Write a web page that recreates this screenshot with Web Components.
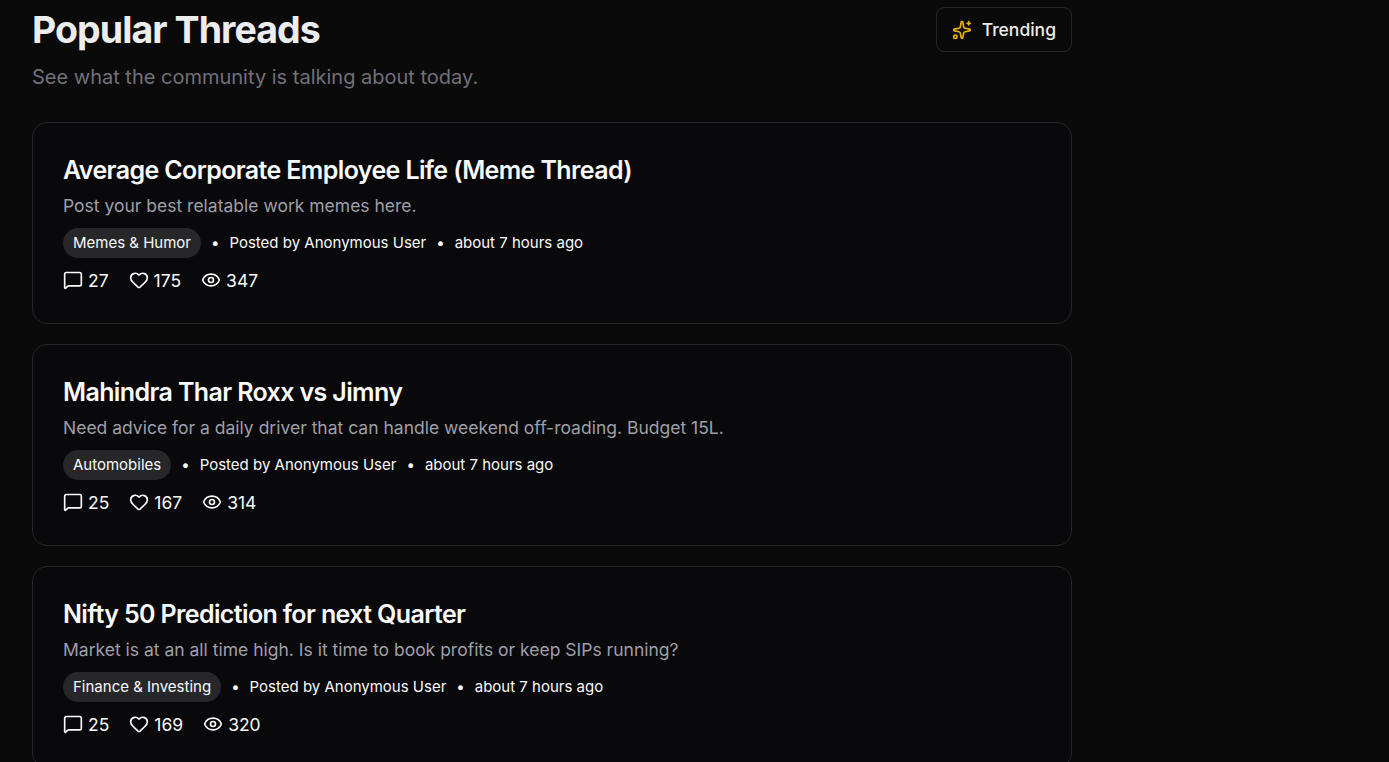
<!DOCTYPE html>
<html lang="en">
<head>
<meta charset="utf-8">
<title>Popular Threads</title>
<style>
  body {
    margin: 0;
    height: 762px;
    overflow: hidden;
    background: #0a0a0a;
    color: #fafafa;
    font-family: Inter, "Liberation Sans", sans-serif;
  }
</style>
</head>
<body>
<thread-page>
  <page-header slot="header">
    Popular Threads
    <span slot="subtitle">See what the community is talking about today.</span>
    <trend-button slot="action">Trending</trend-button>
  </page-header>
  <thread-card category="Memes &amp; Humor" author="Anonymous User" time="about 7 hours ago" comments="27" likes="175" views="347">
    Average Corporate Employee Life (Meme Thread)
    <span slot="excerpt">Post your best relatable work memes here.</span>
  </thread-card>
  <thread-card category="Automobiles" author="Anonymous User" time="about 7 hours ago" comments="25" likes="167" views="314">
    Mahindra Thar Roxx vs Jimny
    <span slot="excerpt">Need advice for a daily driver that can handle weekend off-roading. Budget 15L.</span>
  </thread-card>
  <thread-card category="Finance &amp; Investing" author="Anonymous User" time="about 7 hours ago" comments="25" likes="169" views="320">
    Nifty 50 Prediction for next Quarter
    <span slot="excerpt">Market is at an all time high. Is it time to book profits or keep SIPs running?</span>
  </thread-card>
</thread-page>

<script>
(function () {
  const ICONS = {
    comment: '<path d="M22 17a2 2 0 0 1-2 2H6.828a2 2 0 0 0-1.414.586l-2.202 2.202A.71.71 0 0 1 2 21.286V5a2 2 0 0 1 2-2h16a2 2 0 0 1 2 2z"/>',
    heart: '<path d="M2 9.5a5.5 5.5 0 0 1 9.591-3.676.56.56 0 0 0 .818 0A5.49 5.49 0 0 1 22 9.5c0 2.29-1.5 4-3 5.5l-5.492 5.313a2 2 0 0 1-3 .019L5 15c-1.5-1.5-3-3.2-3-5.5"/>',
    eye: '<path d="M2.062 12.348a1 1 0 0 1 0-.696 10.75 10.75 0 0 1 19.876 0 1 1 0 0 1 0 .696 10.75 10.75 0 0 1-19.876 0"/><circle cx="12" cy="12" r="3"/>',
    sparkles: '<path d="M11.017 2.814a1 1 0 0 1 1.966 0l1.051 5.558a2 2 0 0 0 1.594 1.594l5.558 1.051a1 1 0 0 1 0 1.966l-5.558 1.051a2 2 0 0 0-1.594 1.594l-1.051 5.558a1 1 0 0 1-1.966 0l-1.051-5.558a2 2 0 0 0-1.594-1.594l-5.558-1.051a1 1 0 0 1 0-1.966l5.558-1.051a2 2 0 0 0 1.594-1.594z"/><path d="M20 2v4"/><path d="M22 4h-4"/><circle cx="4" cy="20" r="2"/>'
  };

  function createTemplate(html) {
    const template = document.createElement('template');
    template.innerHTML = html;
    return template;
  }

  class BaseElement extends HTMLElement {
    constructor() {
      super();
      this.attachShadow({mode: 'open'});
      this.shadowRoot.appendChild(this.constructor.template.content.cloneNode(true));
    }
  }

  class ThreadIcon extends BaseElement {
    static template = createTemplate(`
      <style>
        :host {
          display: block;
          flex: none;
          width: 20px;
          height: 20px;
        }

        svg {
          display: block;
          width: 100%;
          height: 100%;
          overflow: visible;
        }
      </style>
      <svg viewBox="0 0 24 24" fill="none" stroke="currentColor" stroke-width="2"
           stroke-linecap="round" stroke-linejoin="round"></svg>
    `);

    connectedCallback() {
      this.shadowRoot.querySelector('svg').innerHTML = ICONS[this.getAttribute('name')] || '';
    }
  }

  class TrendButton extends BaseElement {
    static template = createTemplate(`
      <style>
        :host {
          display: block;
        }

        button {
          display: flex;
          align-items: center;
          gap: 10px;
          box-sizing: border-box;
          height: 45px;
          padding: 0 15px;
          border: 1px solid #262629;
          border-radius: 8px;
          background: none;
          color: #ededed;
          font: 500 17.5px/25px Inter, sans-serif;
        }

        thread-icon {
          color: #eab308;
        }
      </style>
      <button type="button"><thread-icon name="sparkles"></thread-icon><slot></slot></button>
    `);
  }

  class PageHeader extends BaseElement {
    static template = createTemplate(`
      <style>
        :host {
          display: flex;
          justify-content: space-between;
          align-items: flex-start;
          margin-bottom: 10px;
        }

        h1 {
          margin: 0 0 10px;
          color: #ededed;
          font-size: 37.5px;
          font-weight: 700;
          line-height: 45px;
          letter-spacing: -0.025em;
        }

        p {
          margin: 0;
          color: #71717a;
          font-size: 20px;
          line-height: 30px;
        }
      </style>
      <div>
        <h1><slot></slot></h1>
        <p><slot name="subtitle"></slot></p>
      </div>
      <slot name="action"></slot>
    `);
  }

  class ThreadCard extends BaseElement {
    static template = createTemplate(`
      <style>
        :host {
          display: flex;
          flex-direction: column;
          padding: 30px;
          border: 1px solid #262629;
          border-radius: 15px;
          background: #09090b;
        }

        h2 {
          margin: 0 0 5px;
          font-size: 25px;
          font-weight: 600;
          line-height: 35px;
          letter-spacing: -0.025em;
        }

        p {
          margin: 0 0 10px;
          color: #9f9fa9;
          font-size: 17.5px;
          line-height: 25px;
        }

        .meta {
          display: flex;
          align-items: center;
          gap: 10px;
          margin-bottom: 10px;
          font-size: 15px;
          line-height: 20px;
        }

        .category {
          padding: 5px 10px;
          border-radius: 15px;
          background: #27272a;
        }

        .stats {
          display: flex;
          gap: 20px;
          font-size: 17.5px;
          line-height: 25px;
        }

        .stats div {
          display: flex;
          align-items: center;
          gap: 5px;
        }

        /* keeps the 20px icon on whole pixels inside the 25px line */
        .stats thread-icon {
          margin-bottom: 1px;
        }
      </style>
      <h2><slot></slot></h2>
      <p><slot name="excerpt"></slot></p>
      <div class="meta">
        <span class="category"></span>
        <span>•</span>
        <span class="author"></span>
        <span>•</span>
        <span class="time"></span>
      </div>
      <div class="stats">
        <div><thread-icon name="comment"></thread-icon><span class="comments"></span></div>
        <div><thread-icon name="heart"></thread-icon><span class="likes"></span></div>
        <div><thread-icon name="eye"></thread-icon><span class="views"></span></div>
      </div>
    `);

    connectedCallback() {
      ['category', 'time', 'comments', 'likes', 'views'].forEach(name => {
        this.shadowRoot.querySelector('.' + name).textContent = this.getAttribute(name);
      });
      this.shadowRoot.querySelector('.author').textContent = `Posted by ${this.getAttribute('author')}`;
    }
  }

  class ThreadPage extends BaseElement {
    static template = createTemplate(`
      <style>
        :host {
          display: block;
          padding: 7px 0 0 32px;
        }

        main {
          display: flex;
          flex-direction: column;
          gap: 20px;
          width: 1040px;
        }
      </style>
      <main>
        <slot name="header"></slot>
        <slot></slot>
      </main>
    `);
  }

  window.customElements.define('thread-icon', ThreadIcon);
  window.customElements.define('trend-button', TrendButton);
  window.customElements.define('page-header', PageHeader);
  window.customElements.define('thread-card', ThreadCard);
  window.customElements.define('thread-page', ThreadPage);
})();
</script>
</body>
</html>
